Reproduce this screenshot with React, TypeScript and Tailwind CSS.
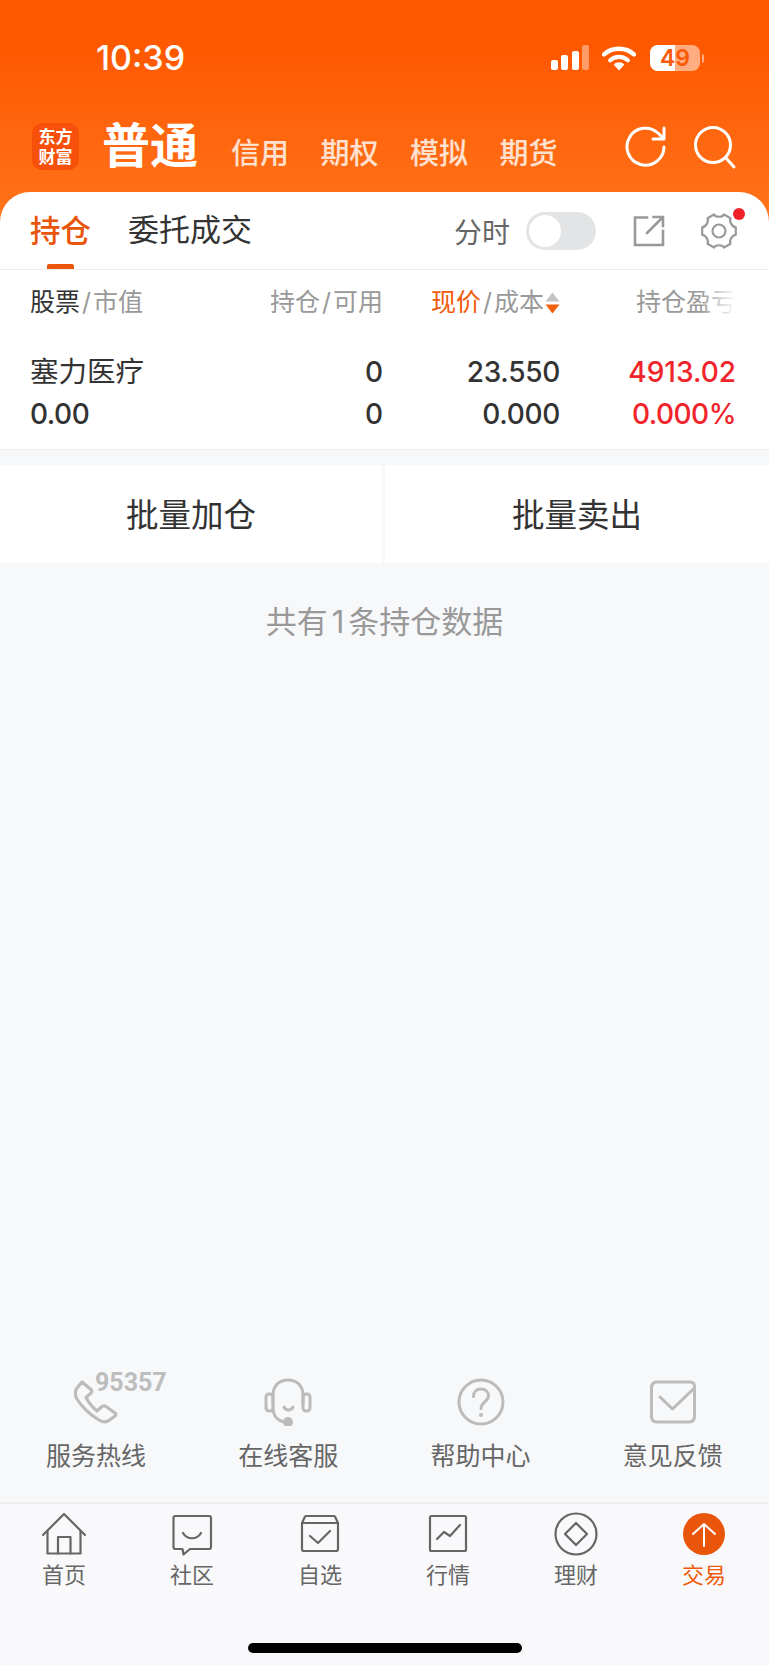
import React from "react";

const FONT = 'font-["Inter","Noto_Sans_CJK_SC",sans-serif]';

const StatusIcons = () => (
  <div className="flex items-center">
    <svg width="40" height="26" viewBox="0 0 40 26" className="fill-white">
      <rect x="0" y="15" width="7" height="10" rx="2" />
      <rect x="10" y="10" width="7" height="15" rx="2" />
      <rect x="21" y="6" width="7" height="19" rx="2" />
      <rect x="31" y="0" width="7" height="25" rx="2" fillOpacity="0.4" />
    </svg>
    <svg width="34" height="26" viewBox="0 0 34 26" className="ml-[11px]" fill="none">
      <path d="M2 9.5C10 1.8 24 1.8 32 9.5" stroke="#fff" strokeWidth="4.4" strokeLinecap="round" />
      <path d="M8.2 15.3C13.2 10.8 20.8 10.8 25.8 15.3" stroke="#fff" strokeWidth="4.2" strokeLinecap="round" />
      <path d="M11.6 19.6C14.8 16.6 19.2 16.6 22.4 19.6L17 25.4Z" fill="#fff" />
    </svg>
    <div className="relative ml-[14px] h-[26px] w-[50px] overflow-hidden rounded-[8px] bg-white/50">
      <div className="h-full w-[25px] bg-white" />
      <span className="absolute inset-0 flex items-center justify-center text-[23px] leading-none font-semibold text-[#fb5a08]">49</span>
    </div>
    <div className="ml-[2px] h-[9px] w-[2px] rounded-r-full bg-white/50" />
  </div>
);

const Logo = () => (
  <div className="flex h-[47px] w-[47px] flex-col items-center justify-center rounded-[10px] bg-[#f6500a] text-[17px] leading-[20px] font-bold text-white">
    <span>东方</span>
    <span>财富</span>
  </div>
);

const RefreshIcon = () => (
  <svg width="42" height="42" viewBox="0 0 42 42" fill="none" stroke="#fff" strokeWidth="3" strokeLinecap="round" strokeLinejoin="round">
    <path d="M39 21A18.5 18.5 0 1 1 33.5 7.5L38.5 12.5" />
    <path d="M39 2V13H28" />
  </svg>
);

const SearchIcon = () => (
  <svg width="44" height="44" viewBox="0 0 44 44" fill="none" stroke="#fff" strokeWidth="3" strokeLinecap="round">
    <circle cx="20" cy="19" r="17.5" />
    <path d="M32.5 31.5L41 41" />
  </svg>
);

const ShareIcon = () => (
  <svg width="32" height="32" viewBox="0 0 32 32" fill="none" stroke="#999" strokeWidth="2.6" strokeLinecap="square">
    <path d="M14 2.5H2V30H30V16" />
    <path d="M14 18L29.5 2.5" strokeLinecap="round" />
    <path d="M20.5 2H30V11" />
  </svg>
);

const GearIcon = () => (
  <svg width="38" height="38" viewBox="0 0 38 38" fill="none" stroke="#999" strokeWidth="2.2" strokeLinejoin="round">
    <path d="M14 2.5C15.5 5.5 22.5 5.5 24 2.5L30.5 6.2C28.8 9.2 32.3 15.2 35.8 15.2V22.8C32.3 22.8 28.8 28.8 30.5 31.8L24 35.5C22.5 32.5 15.5 32.5 14 35.5L7.5 31.8C9.2 28.8 5.7 22.8 2.2 22.8V15.2C5.7 15.2 9.2 9.2 7.5 6.2Z" />
    <circle cx="19" cy="19" r="6.5" />
  </svg>
);

const SortIcon = () => (
  <svg width="15" height="22" viewBox="0 0 15 22" className="ml-[1px]">
    <path d="M7.5 0.5L14.5 9.5H0.5Z" fill="#c4c4c4" />
    <path d="M7.5 21.5L0.5 12.5H14.5Z" fill="#f4600c" />
  </svg>
);

const PhoneIcon = () => (
  <svg width="44" height="44" viewBox="0 0 44 44" fill="none" stroke="#bcbcbc" strokeWidth="3.2" strokeLinejoin="round">
    <path d="M8 2L17.5 10C18 11 18 11.500 17 13L12 17.500C15 23 18 27 23 31L28 26.500C29.500 25.500 30.500 25.500 32 26.500L41 33C42 34 42 35 41 36L34 41C31 42.500 28 42 25 40C15 34 8 27 3 19C0.500 14.500 1 11 3 8Z" />
  </svg>
);

const HeadsetIcon = () => (
  <svg width="48" height="48" viewBox="0 0 48 48" fill="none" stroke="#bbb" strokeWidth="3" strokeLinecap="round" strokeLinejoin="round">
    <rect x="2" y="16" width="7" height="17" rx="3" />
    <rect x="39" y="16" width="7" height="17" rx="3" />
    <path d="M9 26V17C9 8 15 2 24 2C33 2 39 8 39 17V26" />
    <path d="M9 30C9 38 14 43 21 44" />
    <path d="M20 29C22 33 27 33 29 29" />
    <circle cx="24" cy="44" r="3.500" fill="#bbb" />
  </svg>
);

const HelpIcon = () => (
  <svg width="48" height="48" viewBox="0 0 48 48" fill="none" stroke="#bbb" strokeWidth="3" strokeLinecap="round">
    <circle cx="24" cy="24" r="22" />
    <path d="M16.500 18.500C16.500 13.500 20 11 24 11C28.500 11 31.500 14 31.500 18C31.500 23.500 24 24 24 30.500" />
    <circle cx="24" cy="37" r="2" fill="#bbb" stroke="none" />
  </svg>
);

const FeedbackIcon = () => (
  <svg width="48" height="44" viewBox="0 0 48 44" fill="none" stroke="#bbb" strokeWidth="3" strokeLinecap="round" strokeLinejoin="round">
    <path d="M45.500 9V36C45.500 40 43.500 42 40 42H8C4.500 42 2.500 40 2.500 36V8C2.500 4 4.500 2 8 2H41C44 2 45.500 4 45.500 6.500" />
    <path d="M11 17L23.500 29L45.500 8" />
  </svg>
);

const HomeIcon = () => (
  <svg width="44" height="44" viewBox="0 0 44 44" fill="none" stroke="#666" strokeWidth="2.2" strokeLinejoin="round" strokeLinecap="round">
    <path d="M1 23L22 2L43 23" />
    <path d="M5.500 19V41.500H38.500V19" />
    <path d="M16 41.500V25H28.500V41.500" />
  </svg>
);

const ChatIcon = () => (
  <svg width="44" height="44" viewBox="0 0 44 44" fill="none" stroke="#666" strokeWidth="2.2" strokeLinejoin="round" strokeLinecap="round">
    <path d="M5.500 4H39C40 4 41 5 41 6V35C41 36 40 37 39 37H20L13.500 42.500L12.500 37H5.500C4.500 37 3.500 36 3.500 35V6C3.500 5 4.500 4 5.500 4Z" />
    <path d="M13 21C17 28 27 28 31 21" />
  </svg>
);

const SelectIcon = () => (
  <svg width="44" height="44" viewBox="0 0 44 44" fill="none" stroke="#666" strokeWidth="2.2" strokeLinejoin="round" strokeLinecap="round">
    <path d="M4 11V37C4 38 5 39 6 39H38C39 39 40 38 40 37V11Z" />
    <path d="M4 11L7 4.500C7.300 4 8 4 9 4H35C36 4 36.700 4 37 4.500L40 11" />
    <path d="M12 24L20 31L32 19" />
  </svg>
);

const MarketIcon = () => (
  <svg width="44" height="44" viewBox="0 0 44 44" fill="none" stroke="#666" strokeWidth="2.2" strokeLinejoin="round" strokeLinecap="round">
    <rect x="4" y="4" width="36" height="35" rx="1.500" />
    <path d="M11 27L18 20L24 24L34 13" />
  </svg>
);

const WealthIcon = () => (
  <svg width="44" height="44" viewBox="0 0 44 44" fill="none" stroke="#666" strokeWidth="2.2" strokeLinejoin="round">
    <circle cx="22" cy="22" r="20.500" />
    <path d="M22 11L33 22L22 33L11 22Z" />
  </svg>
);

const TradeIcon = () => (
  <svg width="44" height="44" viewBox="0 0 44 44" fill="none">
    <circle cx="22" cy="22" r="21" fill="#e9550a" />
    <path d="M22 34V12M11 22L22 12L33 22" stroke="#fff" strokeWidth="2" strokeLinecap="round" strokeLinejoin="round" />
  </svg>
);

const services = [
  { label: "服务热线", icon: <PhoneIcon /> },
  { label: "在线客服", icon: <HeadsetIcon /> },
  { label: "帮助中心", icon: <HelpIcon /> },
  { label: "意见反馈", icon: <FeedbackIcon /> },
];

const tabs = [
  { label: "首页", icon: <HomeIcon /> },
  { label: "社区", icon: <ChatIcon /> },
  { label: "自选", icon: <SelectIcon /> },
  { label: "行情", icon: <MarketIcon /> },
  { label: "理财", icon: <WealthIcon /> },
  { label: "交易", icon: <TradeIcon />, active: true },
];

const Slash = () => <span className="mx-[2px] text-[#999]">/</span>;

export default function App() {
  return (
    <div className={`${FONT} flex h-[1665px] w-[769px] flex-col overflow-hidden bg-[#f7f8fa]`}>
      <div className="bg-gradient-to-b from-[#ff5900] from-[20%] to-[#ff7a1e]">
        <div className="flex h-[114px] items-center justify-between pt-[2px] pr-[65px] pl-[96px]">
          <span className="text-[34px] leading-none font-medium text-white">10:39</span>
          <StatusIcons />
        </div>
        <div className="flex h-[78px] items-start pt-[9px] pl-[32px]">
          <Logo />
          <span className="mt-[-5px] ml-[23px] text-[48px] leading-[56px] font-bold text-white">普通</span>
          <div className="mt-[11px] ml-[33px] flex gap-[31.5px] text-[29px] leading-[40px] font-medium text-white/80">
            <span>信用</span>
            <span>期权</span>
            <span>模拟</span>
            <span>期货</span>
          </div>
          <div className="mt-[3px] ml-[67px] flex items-start gap-[26px]">
            <RefreshIcon />
            <SearchIcon />
          </div>
        </div>
        <div className="flex h-[78px] items-center rounded-t-[30px] border-b-[1px] border-[#eeeeee] bg-white pr-[31px] pl-[30px]">
          <div className="relative flex h-full items-center">
            <span className="text-[30.500px] font-medium text-[#e9550a]">持仓</span>
            <div className="absolute bottom-0 left-[17px] h-[5px] w-[27px] rounded-t-[2px] bg-[#e9550a]" />
          </div>
          <span className="ml-[37px] text-[31px] text-[#333]">委托成交</span>
          <span className="mt-[4px] ml-auto text-[28px] text-[#666]">分时</span>
          <div className="ml-[16px] flex h-[38px] w-[70px] items-center rounded-full bg-[#e3e4e6] pl-[3px]">
            <div className="h-[32px] w-[32px] rounded-full bg-white" />
          </div>
          <div className="ml-[37px]">
            <ShareIcon />
          </div>
          <div className="relative ml-[35px]">
            <GearIcon />
            <div className="absolute top-[-4px] right-[-7px] h-[12px] w-[12px] rounded-full bg-[#f0202a]" />
          </div>
        </div>
      </div>

      <div className="bg-white pb-[14px]">
        <div className="grid h-[66px] grid-cols-[170px_183px_177px_176px] items-center pl-[30px] text-[25px] text-[#999]">
          <div>
            <span className="text-[#333]">股票</span>
            <Slash />
            <span>市值</span>
          </div>
          <div className="text-right">
            持仓
            <Slash />
            可用
          </div>
          <div className="flex items-center justify-end">
            <span className="text-[#f0590a]">现价</span>
            <Slash />
            <span>成本</span>
            <SortIcon />
          </div>
          <div className="relative overflow-hidden text-right whitespace-nowrap">
            持仓盈亏
            <div className="absolute inset-y-0 right-0 w-[36px] bg-gradient-to-r from-white/0 to-white" />
          </div>
        </div>
        <div className="mt-[15px] grid grid-cols-[170px_183px_177px_176px] pl-[30px] text-[28px] leading-[42px] font-medium text-[#333]">
          <span className="text-[28.500px] font-normal">塞力医疗</span>
          <span className="text-right">0</span>
          <span className="text-right tracking-[-0.3px]">23.550</span>
          <span className="text-right text-[#f0242b]">4913.02</span>
          <span className="tracking-[-0.5px]">0.00</span>
          <span className="text-right">0</span>
          <span className="text-right tracking-[-0.3px]">0.000</span>
          <span className="text-right tracking-[-0.5px] text-[#f0242b]">0.000%</span>
        </div>
      </div>

      <div className="grid grid-cols-[382px_1fr] gap-[3px] border-t-[1px] border-[#eeeeee] pt-[15px]">
        <div className="flex h-[98px] items-center justify-center bg-white pt-[4px] text-[32.500px] text-[#333]">批量加仓</div>
        <div className="flex h-[98px] items-center justify-center bg-white pt-[4px] text-[32.500px] text-[#333]">批量卖出</div>
      </div>

      <div className="mt-[36px] text-center text-[31px] leading-[46px] text-[#999]">
        共有<span className="mx-[4px]">1</span>条持仓数据
      </div>

      <div className="mt-auto grid grid-cols-4">
        {services.map((s, i) => (
          <div key={s.label} className="relative flex h-[136px] flex-col items-center">
            <div className="mt-[6px] flex h-[60px] items-center">{s.icon}</div>
            {i === 0 && (
              <span className='absolute top-[4px] left-[95px] font-["Roboto",sans-serif] text-[25px] leading-[26px] font-bold text-[#bdbdbd]'>95357</span>
            )}
            <span className="mt-[6px] text-[25px] leading-[36px] text-[#666]">{s.label}</span>
          </div>
        ))}
      </div>

      <div className="h-[163px] border-t-[2px] border-[#eeeeef] bg-[#f9f9fb]">
        <div className="grid grid-cols-6 pr-[1px]">
          {tabs.map((t) => (
            <div key={t.label} className="flex flex-col items-center pt-[8px]">
              {t.icon}
              <span className={`mt-[3px] text-[22px] leading-[32px] ${t.active ? "text-[#f0590a]" : "text-[#666]"}`}>{t.label}</span>
            </div>
          ))}
        </div>
        <div className="mx-auto mt-[52px] h-[10px] w-[274px] rounded-full bg-black" />
      </div>
    </div>
  );
}
